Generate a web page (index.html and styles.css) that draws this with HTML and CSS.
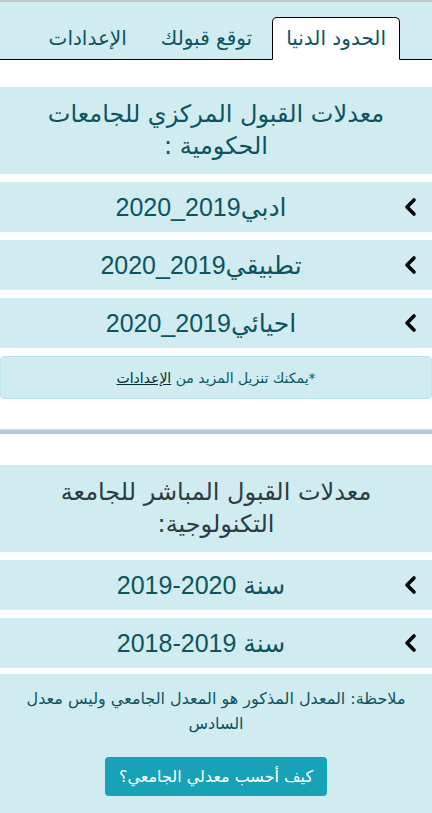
FILE: index.html
```html
<!DOCTYPE html>
<html lang="ar" dir="rtl">
<head>
<meta charset="utf-8">
<title>الحدود الدنيا</title>
<link rel="stylesheet" href="styles.css">
</head>
<body>
<div class="topline"></div>
<nav class="tabs">
  <a class="tab active" href="#">الحدود الدنيا</a>
  <a class="tab" href="#">توقع قبولك</a>
  <a class="tab" href="#">الإعدادات</a>
</nav>

<main class="content">
  <h2 class="section-title teal">معدلات القبول المركزي للجامعات الحكومية :</h2>
  <div class="row-item">
    <span class="chev"><svg width="16" height="20" viewBox="0 0 16 20"><polyline points="12,3 5,10 12,17" fill="none" stroke="#000" stroke-width="3.6" stroke-linecap="round" stroke-linejoin="round"/></svg></span>
    <span class="row-text">ادبي2019_2020</span>
  </div>
  <div class="row-item">
    <span class="chev"><svg width="16" height="20" viewBox="0 0 16 20"><polyline points="12,3 5,10 12,17" fill="none" stroke="#000" stroke-width="3.6" stroke-linecap="round" stroke-linejoin="round"/></svg></span>
    <span class="row-text">تطبيقي2019_2020</span>
  </div>
  <div class="row-item">
    <span class="chev"><svg width="16" height="20" viewBox="0 0 16 20"><polyline points="12,3 5,10 12,17" fill="none" stroke="#000" stroke-width="3.6" stroke-linecap="round" stroke-linejoin="round"/></svg></span>
    <span class="row-text">احيائي2019_2020</span>
  </div>
  <div class="notice">*يمكنك تنزيل المزيد من&nbsp;<a href="#">الإعدادات</a></div>

  <div class="divider"></div>

  <h2 class="section-title dark">معدلات القبول المباشر للجامعة التكنولوجية:</h2>
  <div class="row-item">
    <span class="chev"><svg width="16" height="20" viewBox="0 0 16 20"><polyline points="12,3 5,10 12,17" fill="none" stroke="#000" stroke-width="3.6" stroke-linecap="round" stroke-linejoin="round"/></svg></span>
    <span class="row-text">سنة 2020-2019</span>
  </div>
  <div class="row-item">
    <span class="chev"><svg width="16" height="20" viewBox="0 0 16 20"><polyline points="12,3 5,10 12,17" fill="none" stroke="#000" stroke-width="3.6" stroke-linecap="round" stroke-linejoin="round"/></svg></span>
    <span class="row-text">سنة 2019-2018</span>
  </div>

  <section class="footer-note">
    <p>ملاحظة: المعدل المذكور هو المعدل الجامعي وليس معدل السادس</p>
    <a class="btn" href="#">كيف أحسب معدلي الجامعي؟</a>
  </section>
</main>
</body>
</html>
```

FILE: styles.css
```css
* { box-sizing: border-box; }
html, body {
  margin: 0;
  padding: 0;
  background: #fff;
  font-family: "DejaVu Sans", "Noto Sans", sans-serif;
}
.topline {
  height: 2px;
  background: #c4c4c4;
}
.tabs {
  display: flex;
  align-items: flex-end;
  gap: 6px;
  background: #d1ecf1;
  padding: 15px 32px 0 0;
  border-bottom: 1px solid #000;
}
.tab {
  display: block;
  padding: 7px 13px 8px;
  font-size: 20px;
  line-height: 26px;
  color: #0c5460;
  text-decoration: none;
  border: 1px solid transparent;
  border-radius: 5px 5px 0 0;
  margin-bottom: -1px;
}
.tab.active {
  background: #fff;
  border-color: #000;
  border-bottom-color: #fff;
}
.content {
  padding-top: 27px;
}
.section-title {
  margin: 0;
  background: #d1ecf1;
  text-align: center;
  font-weight: normal;
  font-size: 24px;
  line-height: 32px;
  padding: 11px 24px 12px;
}
.section-title.teal { color: #0c5460; }
.section-title.dark { color: #2f3b3f; }
.row-item {
  display: grid;
  grid-template-columns: 30px 1fr;
  align-items: center;
  height: 50px;
  margin-top: 8px;
  background: #d1ecf1;
}
.chev {
  display: flex;
  justify-content: flex-end;
  padding-left: 0;
}
.chev svg { display: block; }
.row-text {
  text-align: center;
  font-family: "Liberation Sans", "DejaVu Sans", sans-serif;
  font-size: 25px;
  color: #0c5460;
}
.notice {
  margin-top: 8px;
  background: #d1ecf1;
  border: 1px solid #bee5eb;
  border-radius: 4px;
  height: 43px;
  display: flex;
  align-items: center;
  justify-content: center;
  font-size: 14px;
  color: #0c5460;
}
.notice a {
  color: #062c33;
  text-decoration: underline;
}
.divider {
  margin: 30px 0 31px;
  height: 5px;
  background: #aecdd3;
  border-top: 1px solid #c9e0e4;
}
.footer-note {
  margin-top: 6px;
  background: #d1ecf1;
  text-align: center;
  padding: 12px 24px 18px;
}
.footer-note p {
  margin: 0 0 21px;
  font-size: 16px;
  line-height: 25px;
  color: #0c5460;
}
.btn {
  display: inline-block;
  background: #17a2b8;
  color: #fff;
  text-decoration: none;
  font-size: 16px;
  line-height: 25px;
  padding: 7px 14px;
  border-radius: 4px;
}
```
